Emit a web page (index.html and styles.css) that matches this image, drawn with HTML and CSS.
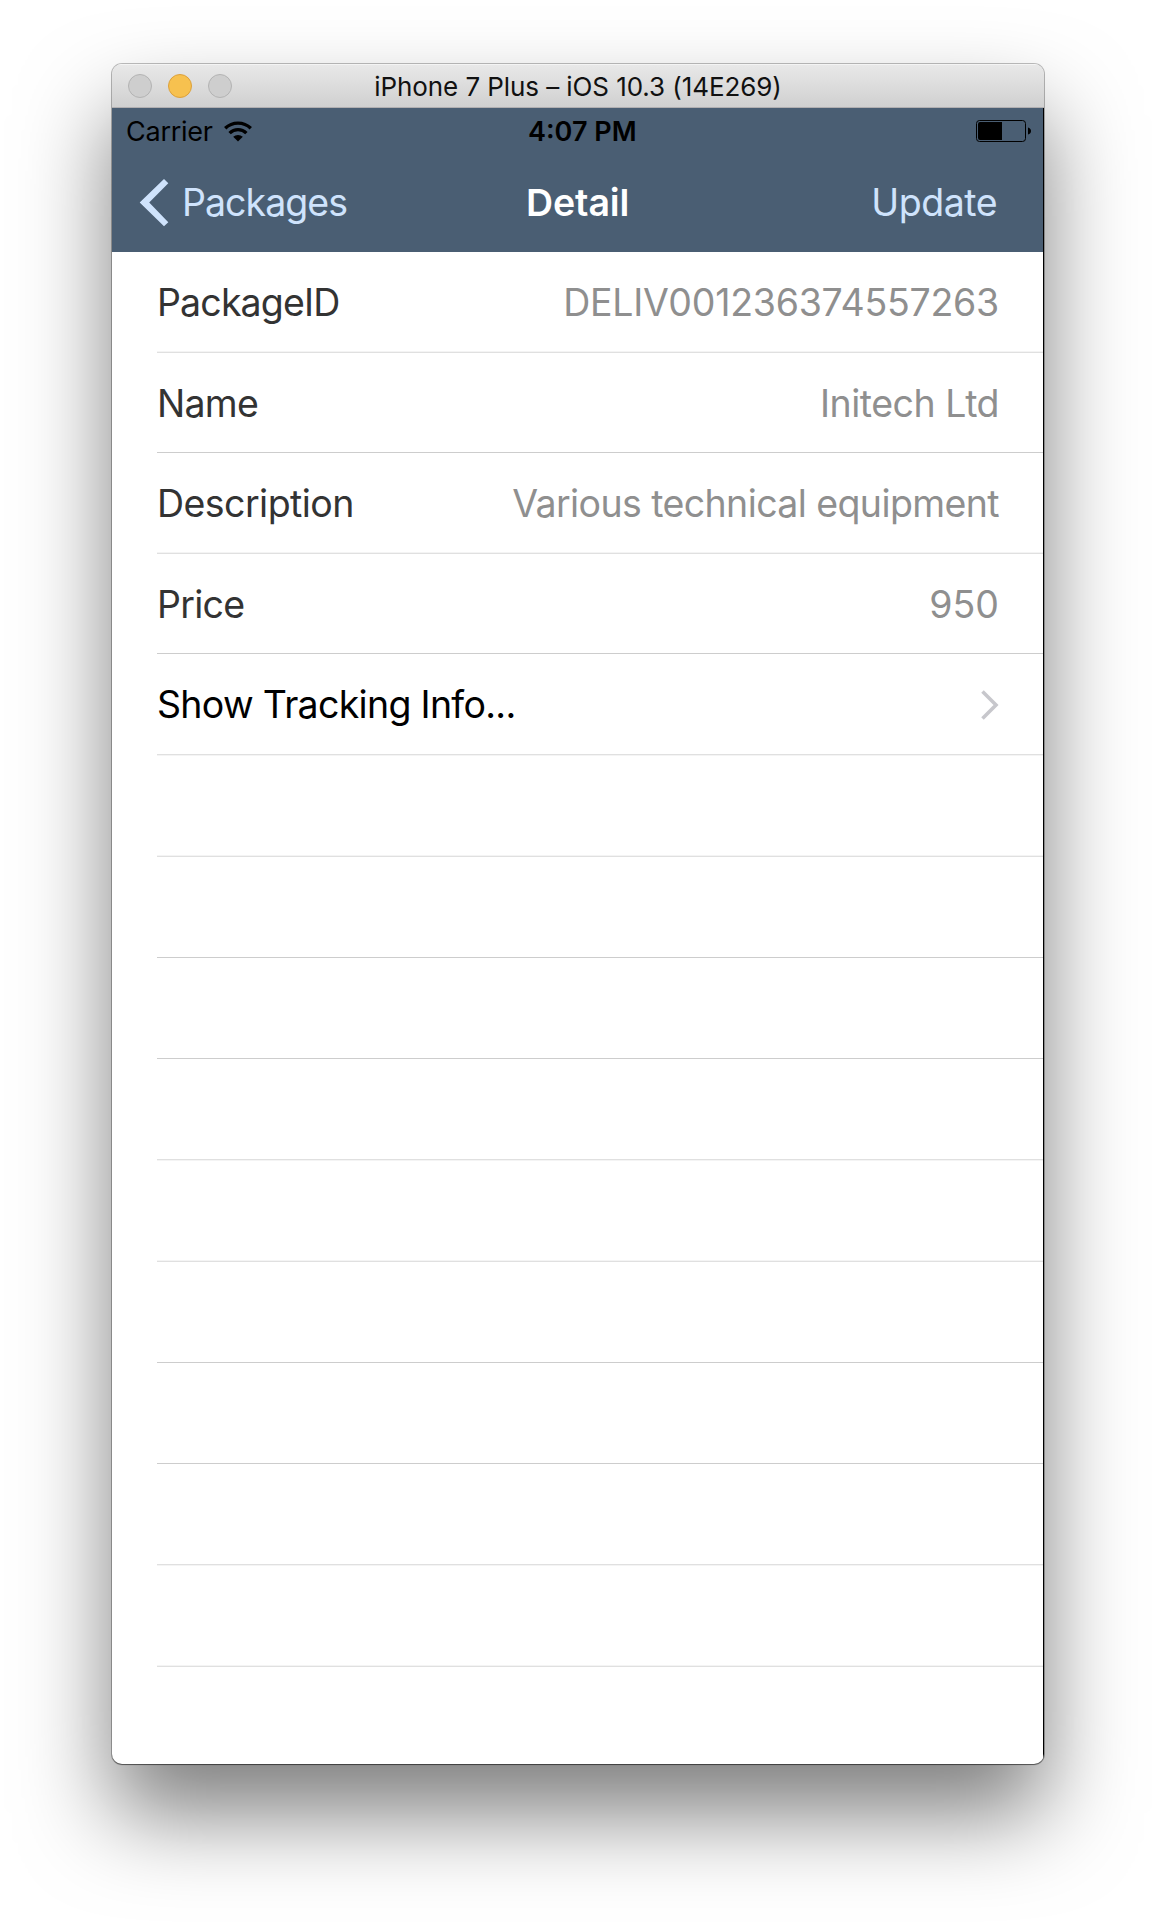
FILE: index.html
```html
<!DOCTYPE html>
<html lang="en">
<head>
<meta charset="utf-8">
<title>Detail</title>
<link rel="stylesheet" href="styles.css">
</head>
<body>
<main class="window">
  <header class="titlebar">
    <div class="lights"><i class="light"></i><i class="light light-min"></i><i class="light"></i></div>
    <div class="window-title">iPhone 7 Plus – iOS 10.3 (14E269)</div>
  </header>
  <div class="screen">
    <div class="statusbar">
      <div class="carrier"><span class="carrier-name">Carrier</span>
        <svg class="wifi" width="28" height="21" viewBox="0 0 28 21"><g fill="none" stroke="#000" stroke-width="3.4"><path d="M1.200 7.200a18.600 18.600 0 0 1 25.600 0"/><path d="M5.600 12.100a12 12 0 0 1 16.800 0"/></g><path d="M9.200 15.800a7 7 0 0 1 9.600 0L14 20.600z"/></svg>
      </div>
      <div class="clock">4:07 PM</div>
      <svg class="battery" width="55" height="22" viewBox="0 0 55 22"><rect x=".5" y=".5" width="49" height="21" rx="3" fill="none" stroke="#000"/><path d="M2 4q0-2 2-2h22v18H4q-2 0-2-2zM52 7.500q3 1 3 3.500t-3 3.500z"/></svg>
    </div>
    <nav class="navbar">
      <div class="back"><svg class="back-icon" width="30" height="49" viewBox="0 0 30 49"><path d="M25 1 29.300 5.200 10.200 24.600 29.300 44.200 25 48.300.7 24.600z" fill="#cfe3fc"/></svg><span class="back-label">Packages</span></div>
      <h1 class="nav-title">Detail</h1>
      <div class="update">Update</div>
    </nav>
    <div class="list">
      <div class="row soft-above"><span class="label label-id">PackageID</span><span class="value value-id">DELIV001236374557263</span></div>
      <div class="row"><span class="label">Name</span><span class="value">Initech Ltd</span></div>
      <div class="row soft-above"><span class="label label-description">Description</span><span class="value value-description">Various technical equipment</span></div>
      <div class="row"><span class="label">Price</span><span class="value value-price">950</span></div>
      <div class="row link soft-below"><span class="label label-link">Show Tracking Info...</span><svg class="chevron" width="18" height="30" viewBox="0 0 18 30"><path d="M1.500 1.500 15 15 1.500 28.500" fill="none" stroke="#c7c7cc" stroke-width="3.600"/></svg></div>
      <div class="row soft-above"></div>
      <div class="row"></div>
      <div class="row"></div>
      <div class="row soft-below"></div>
      <div class="row soft-above"></div>
      <div class="row"></div>
      <div class="row"></div>
      <div class="row soft-below"></div>
      <div class="row soft-above"></div>
    </div>
  </div>
</main>
</body>
</html>
```
FILE: styles.css
```css
* { box-sizing: border-box; }
body { margin: 0; height: 1924px; padding: 64px 112px 0; background: #fff; overflow: hidden; font-family: Inter, "Liberation Sans", sans-serif; }
.window { width: 932px; height: 1700px; border-radius: 10px; overflow: hidden; background: #fff; box-shadow: 0 0 0 1px rgba(0,0,0,.25), 0 1px 1px rgba(0,0,0,.4), 0 50px 90px rgba(0,0,0,.51); }
.titlebar { height: 44px; display: grid; grid-template-columns: 1fr auto 1fr; align-items: center; background: linear-gradient(#e8e8e8, #d0d0d0); border-top: 1px solid #f4f4f4; border-bottom: 1px solid #b1afb1; padding: 0 16px; }
.lights { display: flex; gap: 16px; }
.light { width: 24px; height: 24px; border-radius: 50%; background: #cecece; border: 1px solid #b3b3b3; }
.light-min { background: #f7c14f; border-color: #dba03c; }
.window-title { font-size: 26px; letter-spacing: -0.08px; color: #111; white-space: nowrap; }
.screen { border-right: 1px solid #000; }
.statusbar { height: 48px; padding: 0 12px 2px 14px; background: #4a5e73; display: grid; grid-template-columns: 402px auto 1fr; align-items: center; }
.carrier { display: flex; align-items: center; gap: 11px; }
.carrier-name { font-size: 27px; letter-spacing: -0.25px; }
.clock { font-size: 27px; font-weight: 600; }
.battery { justify-self: end; }
.navbar { height: 96px; padding: 0 46px 4px 27px; background: #4a5e73; color: #cfe3fc; display: grid; grid-template-columns: 387px auto 1fr; align-items: center; font-size: 37.5px; }
.back { display: flex; align-items: center; gap: 13px; }
.back-label { letter-spacing: -0.95px; }
.nav-title { margin: 0; font-size: 37.5px; font-weight: 600; letter-spacing: -0.1px; color: #fff; }
.update { justify-self: end; letter-spacing: -0.5px; }
.list { height: 1512px; padding-left: 45px; display: grid; grid-template-rows: 101px 100px 101px 100px 101px 102px 101px 101px 101px 102px 101px 101px 101px 102px; align-content: start; }
.row { display: flex; align-items: center; justify-content: space-between; padding: 1px 44px 0 0; border-bottom: 1px solid #cdcdcd; color: #333; font-size: 37.5px; }
.soft-above { border-color: #e0e0e0; box-shadow: inset 0 -1px #f4f4f4; }
.soft-below { border-color: #e0e0e0; box-shadow: 0 1px #f4f4f4; }
.label { letter-spacing: -0.75px; }
.label-id { letter-spacing: -0.85px; }
.label-description { letter-spacing: -0.55px; }
.label-link { letter-spacing: -0.7px; }
.link { color: #000; }
.value { color: #8f8f8f; letter-spacing: -0.5px; }
.value-id { letter-spacing: -0.25px; }
.value-description { letter-spacing: -0.6px; }
.value-price { letter-spacing: 0; }
```
